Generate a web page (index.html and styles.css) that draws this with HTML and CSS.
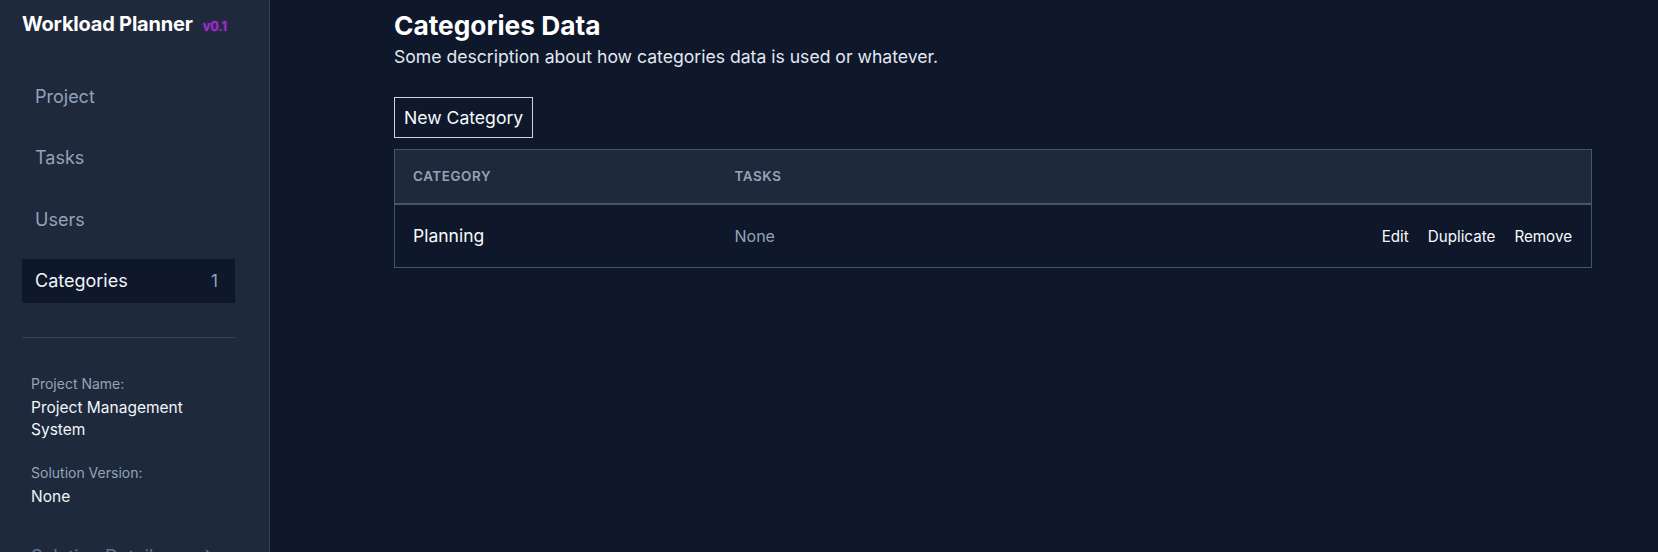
FILE: index.html
```html
<!DOCTYPE html>
<html lang="en">
<head>
<meta charset="utf-8">
<title>Workload Planner</title>
<link rel="stylesheet" href="styles.css">
</head>
<body>
<div class="app">
  <aside class="sidebar">
    <div class="brand">
      <span class="brand-name">Workload Planner</span>
      <span class="brand-version">v0.1</span>
    </div>
    <nav class="nav">
      <a class="nav-item">Project</a>
      <a class="nav-item">Tasks</a>
      <a class="nav-item">Users</a>
      <a class="nav-item active">Categories <span class="count">1</span></a>
    </nav>
    <hr class="divider">
    <div class="info">
      <div class="info-label">Project Name:</div>
      <div class="info-value">Project Management System</div>
      <div class="info-label">Solution Version:</div>
      <div class="info-value">None</div>
    </div>
    <div class="details">
      <span>Solution Details</span>
      <svg class="chev" width="10" height="16" viewBox="0 0 10 16"><path d="M2 2l6 6-6 6" fill="none" stroke="#64748b" stroke-width="1.5"/></svg>
    </div>
  </aside>
  <main class="main">
    <h1 class="title">Categories Data</h1>
    <p class="desc">Some description about how categories data is used or whatever.</p>
    <button class="btn">New Category</button>
    <table class="table">
      <thead>
        <tr><th class="col-cat">Category</th><th>Tasks</th><th></th></tr>
      </thead>
      <tbody>
        <tr>
          <td class="name">Planning</td>
          <td class="muted">None</td>
          <td class="actions"><a>Edit</a><a>Duplicate</a><a>Remove</a></td>
        </tr>
      </tbody>
    </table>
  </main>
</div>
</body>
</html>
```
FILE: styles.css
```css
* { box-sizing: border-box; }
html, body { margin: 0; height: 100%; }
body {
  background: #0f172a;
  color: #f8fafc;
  font-family: Inter, "Noto Sans", sans-serif;
  overflow: hidden;
}
.app { display: flex; height: 552px; }
.sidebar {
  width: 270px;
  flex: none;
  background: #1e293b;
  border-right: 1px solid #334155;
  padding: 12px 34px 0 22px;
  overflow: hidden;
}
.brand { display: flex; align-items: baseline; gap: 10px; height: 26px; }
.brand-name { font-size: 20px; font-weight: 700; color: #fff; letter-spacing: -0.2px; }
.brand-version { font-size: 13px; font-weight: 600; color: #a52bd2; text-shadow: 0 0 3px rgba(165,43,210,0.6); }
.nav { display: flex; flex-direction: column; gap: 17.5px; margin-top: 36px; }
.nav-item {
  display: flex; align-items: center; justify-content: space-between;
  height: 44px; padding: 0 17px 0 13px;
  font-size: 18px; color: #94a3b8;
}
.nav-item.active { background: #0f172a; color: #f1f5f9; }
.count { color: #94a3b8; font-size: 17px; }
.divider { border: 0; border-top: 1px solid #334155; margin: 34px 0 0; }
.info { padding: 0 9px; margin-top: 36px; }
.info-label { font-size: 14px; color: #94a3b8; line-height: 20px; }
.info-value { font-size: 15.5px; color: #f1f5f9; line-height: 22px; margin-top: 3px; margin-bottom: 22px; }
.details {
  display: flex; justify-content: space-between; align-items: center;
  padding: 0 9px; margin-top: 38px; font-size: 18px; color: #64748b;
}
.chev { margin-right: 12px; }
.main { flex: 1; padding: 10px 66px 0 124px; }
.title { font-size: 26.3px; font-weight: 700; margin: 0; line-height: 32px; color: #fff; }
.desc { font-size: 17.6px; margin: 3px 0 0; color: #e2e8f0; line-height: 24px; }
.btn {
  margin-top: 28px;
  height: 41px; padding: 0 9px;
  background: #0f172a; color: #f8fafc;
  border: 1px solid #cbd5e1;
  font-family: inherit; font-size: 17.6px;
}
.table {
  width: 100%;
  margin-top: 11px;
  border-collapse: collapse;
  border: 1px solid #475569;
}
thead tr { background: #1e293b; height: 54px; border-bottom: 2px solid #475569; }
th {
  text-align: left; padding: 0 18px;
  font-size: 13.4px; font-weight: 600; letter-spacing: 0.6px;
  text-transform: uppercase; color: #94a3b8;
}
.col-cat { width: 322px; }
tbody tr { height: 64px; }
td { padding: 0 18px; font-size: 17.5px; color: #f8fafc; }
td.muted { color: #94a3b8; font-size: 16px; }
.actions { text-align: right; padding-right: 19px; }
.actions a { font-size: 15.2px; color: #f8fafc; margin-left: 19px; }
```
